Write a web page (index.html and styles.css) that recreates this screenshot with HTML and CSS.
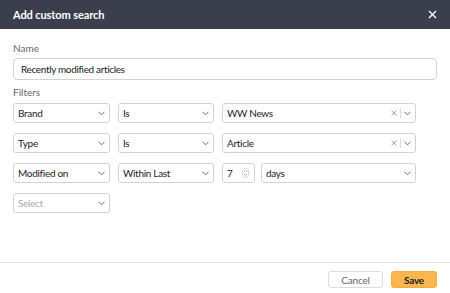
FILE: index.html
```html
<!DOCTYPE html>
<html lang="en">
<head>
    <meta charset="UTF-8">
    <meta name="viewport" content="width=device-width, initial-scale=1.0">
    <title>Add custom search</title>
    <link rel="stylesheet" href="styles.css">
</head>
<body>
    <div class="modal">
        <div class="modalHeader">
            <span class="modalTitle">Add custom search</span>
            <svg class="closeIcon" width="9" height="9" viewBox="0 0 9 9">
                <path d="M1 1 L8 8 M8 1 L1 8" stroke="#fff" stroke-width="1.4" fill="none"/>
            </svg>
        </div>

        <div class="modalBody">
            <div class="fieldLabel">Name</div>
            <div class="textInput">Recently modified articles</div>

            <div class="fieldLabel filtersLabel">Filters</div>
            <div class="filterList">
                <div class="filterRow">
                    <div class="selectBox"><span>Brand</span><svg class="chevron" width="7" height="5" viewBox="0 0 7 5"><path d="M0.5 0.8 L3.5 3.8 L6.5 0.8" stroke="#666" fill="none"/></svg></div>
                    <div class="selectBox"><span>Is</span><svg class="chevron" width="7" height="5" viewBox="0 0 7 5"><path d="M0.5 0.8 L3.5 3.8 L6.5 0.8" stroke="#666" fill="none"/></svg></div>
                    <div class="selectBox">
                        <span>WW News</span>
                        <div class="selectTools">
                            <svg class="clearIcon" width="6" height="6" viewBox="0 0 6 6"><path d="M0.5 0.5 L5.5 5.5 M5.5 0.5 L0.5 5.5" stroke="#aaa" fill="none"/></svg>
                            <span class="toolSep"></span>
                            <svg class="chevron" width="7" height="5" viewBox="0 0 7 5"><path d="M0.5 0.8 L3.5 3.8 L6.5 0.8" stroke="#666" fill="none"/></svg>
                        </div>
                    </div>
                </div>
                <div class="filterRow">
                    <div class="selectBox"><span>Type</span><svg class="chevron" width="7" height="5" viewBox="0 0 7 5"><path d="M0.5 0.8 L3.5 3.8 L6.5 0.8" stroke="#666" fill="none"/></svg></div>
                    <div class="selectBox"><span>Is</span><svg class="chevron" width="7" height="5" viewBox="0 0 7 5"><path d="M0.5 0.8 L3.5 3.8 L6.5 0.8" stroke="#666" fill="none"/></svg></div>
                    <div class="selectBox">
                        <span>Article</span>
                        <div class="selectTools">
                            <svg class="clearIcon" width="6" height="6" viewBox="0 0 6 6"><path d="M0.5 0.5 L5.5 5.5 M5.5 0.5 L0.5 5.5" stroke="#aaa" fill="none"/></svg>
                            <span class="toolSep"></span>
                            <svg class="chevron" width="7" height="5" viewBox="0 0 7 5"><path d="M0.5 0.8 L3.5 3.8 L6.5 0.8" stroke="#666" fill="none"/></svg>
                        </div>
                    </div>
                </div>
                <div class="filterRow">
                    <div class="selectBox"><span>Modified on</span><svg class="chevron" width="7" height="5" viewBox="0 0 7 5"><path d="M0.5 0.8 L3.5 3.8 L6.5 0.8" stroke="#666" fill="none"/></svg></div>
                    <div class="selectBox"><span>Within Last</span><svg class="chevron" width="7" height="5" viewBox="0 0 7 5"><path d="M0.5 0.8 L3.5 3.8 L6.5 0.8" stroke="#666" fill="none"/></svg></div>
                    <div class="splitCell">
                        <div class="selectBox numberBox">
                            <span>7</span>
                            <svg class="spinner" width="7" height="10" viewBox="0 0 7 10">
                                <rect x="0.5" y="0.5" width="6" height="9" rx="3" stroke="#d6d6d6" fill="none"/>
                                <path d="M2 4 L3.5 2.5 L5 4 M2 6 L3.5 7.5 L5 6" stroke="#b4b4b4" fill="none"/>
                            </svg>
                        </div>
                        <div class="selectBox"><span>days</span><svg class="chevron" width="7" height="5" viewBox="0 0 7 5"><path d="M0.5 0.8 L3.5 3.8 L6.5 0.8" stroke="#666" fill="none"/></svg></div>
                    </div>
                </div>
                <div class="filterRow">
                    <div class="selectBox placeholder"><span>Select</span><svg class="chevron" width="7" height="5" viewBox="0 0 7 5"><path d="M0.5 0.8 L3.5 3.8 L6.5 0.8" stroke="#666" fill="none"/></svg></div>
                </div>
            </div>
        </div>

        <div class="modalFooter">
            <button class="btn btnCancel">Cancel</button>
            <button class="btn btnSave">Save</button>
        </div>
    </div>
</body>
</html>
```

FILE: styles.css
```css
body {
    margin: 0;
    font-family: Lato, "Open Sans", sans-serif;
    background-color: #fff;
    color: #333;
}
.modal {
    width: 450px;
    height: 293px;
    display: flex;
    flex-direction: column;
}
.modalHeader {
    height: 29px;
    background-color: #3a3e4d;
    padding: 0 13px;
    display: flex;
    align-items: center;
    justify-content: space-between;
}
.modalTitle {
    color: #fff;
    font-size: 11px;
    font-weight: bold;
    letter-spacing: -0.1px;
}
.modalBody {
    flex: 1;
    padding: 12px 13px 0;
}
.fieldLabel {
    font-size: 10px;
    line-height: 14px;
    color: #666;
}
.filtersLabel {
    margin-top: 5px;
}
.textInput {
    margin-top: 3px;
    height: 20px;
    border: 1px solid #d2d2d2;
    border-radius: 4px;
    padding: 0 7px;
    font-size: 10px;
    letter-spacing: -0.35px;
    line-height: 20px;
    color: #222;
}
.filterList {
    margin-top: 4px;
    display: flex;
    flex-direction: column;
    gap: 10px;
}
.filterRow {
    display: grid;
    grid-template-columns: 97px 96px 194px;
    gap: 8px;
}
.splitCell {
    display: grid;
    grid-template-columns: 33px 155px;
    gap: 6px;
}
.selectBox {
    height: 18px;
    border: 1px solid #d2d2d2;
    border-radius: 3px;
    padding: 0 4px 0 4px;
    display: flex;
    align-items: center;
    justify-content: space-between;
    font-size: 10px;
    letter-spacing: -0.3px;
    color: #222;
}
.placeholder {
    color: #aaa;
}
.selectTools {
    display: flex;
    align-items: center;
    gap: 3px;
}
.toolSep {
    width: 1px;
    height: 10px;
    background-color: #ddd;
}
.numberBox {
    padding-right: 5px;
}
.modalFooter {
    height: 31px;
    border-top: 1px solid #e4e4e4;
    padding: 8px 13px 0;
    box-sizing: border-box;
    display: flex;
    justify-content: flex-end;
    align-items: flex-start;
    gap: 8px;
}
.btn {
    height: 17px;
    font-family: Lato, "Open Sans", sans-serif;
    font-size: 10px;
    letter-spacing: -0.2px;
    border-radius: 3px;
    padding: 0;
    cursor: pointer;
}
.btnCancel {
    width: 55px;
    background-color: #fff;
    border: 1px solid #dcdcdc;
    color: #666;
}
.btnSave {
    width: 46px;
    background-color: #fcb64e;
    border: 1px solid #f3ab45;
    color: #222;
    font-weight: bold;
}
```
